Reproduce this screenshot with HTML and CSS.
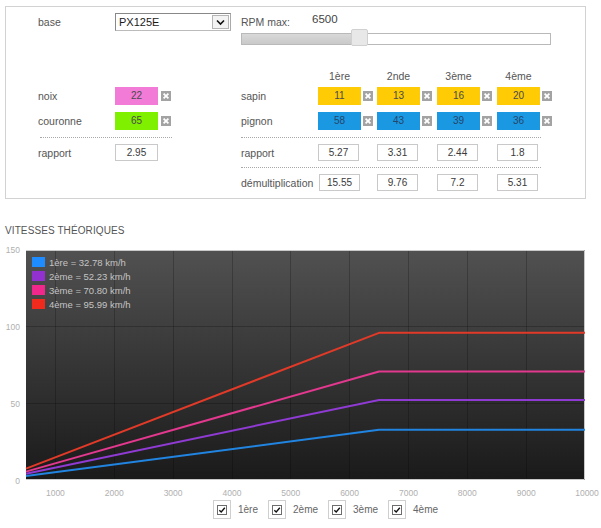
FILE: index.html
```html
<!DOCTYPE html>
<html lang="fr">
<head>
<meta charset="utf-8">
<title>Vitesses</title>
<link rel="stylesheet" href="styles.css">
</head>
<body>
<div class="panel">
  <div class="row r-top">
    <span class="lbl">base</span>
    <div class="select"><span class="sel-text">PX125E</span><span class="sel-btn"><svg width="15" height="14" viewBox="0 0 15 14"><path d="M4 5.5L7.5 9L11 5.5" fill="none" stroke="#111" stroke-width="1.6"/></svg></span></div>
    <div class="rpm"><span class="lbl rpm-lbl">RPM max:</span><span class="rpm-val">6500</span></div>
  </div>
  <div class="row r-slider">
    <div class="track"><div class="fill"></div><div class="handle"></div></div>
  </div>
  <div class="row r-head">
    <span class="hd c4">1ère</span>
    <span class="hd c5">2nde</span>
    <span class="hd c6">3ème</span>
    <span class="hd c7">4ème</span>
  </div>
  <div class="row r-sapin">
    <span class="lbl">noix</span>
    <div class="field"><span class="in pink">22</span><svg class="x" width="10" height="10" viewBox="0 0 10 10"><rect width="10" height="10" fill="#a3a3a3"/><path d="M2.6 2.6L7.4 7.4M7.4 2.6L2.6 7.4" stroke="#fff" stroke-width="1.8"/></svg></div>
    <span class="lbl">sapin</span>
    <div class="field"><span class="in yellow">11</span><svg class="x" width="10" height="10" viewBox="0 0 10 10"><rect width="10" height="10" fill="#a3a3a3"/><path d="M2.6 2.6L7.4 7.4M7.4 2.6L2.6 7.4" stroke="#fff" stroke-width="1.8"/></svg></div>
    <div class="field"><span class="in yellow">13</span><svg class="x" width="10" height="10" viewBox="0 0 10 10"><rect width="10" height="10" fill="#a3a3a3"/><path d="M2.6 2.6L7.4 7.4M7.4 2.6L2.6 7.4" stroke="#fff" stroke-width="1.8"/></svg></div>
    <div class="field"><span class="in yellow">16</span><svg class="x" width="10" height="10" viewBox="0 0 10 10"><rect width="10" height="10" fill="#a3a3a3"/><path d="M2.6 2.6L7.4 7.4M7.4 2.6L2.6 7.4" stroke="#fff" stroke-width="1.8"/></svg></div>
    <div class="field"><span class="in yellow">20</span><svg class="x" width="10" height="10" viewBox="0 0 10 10"><rect width="10" height="10" fill="#a3a3a3"/><path d="M2.6 2.6L7.4 7.4M7.4 2.6L2.6 7.4" stroke="#fff" stroke-width="1.8"/></svg></div>
  </div>
  <div class="row r-pignon">
    <span class="lbl">couronne</span>
    <div class="field"><span class="in green">65</span><svg class="x" width="10" height="10" viewBox="0 0 10 10"><rect width="10" height="10" fill="#a3a3a3"/><path d="M2.6 2.6L7.4 7.4M7.4 2.6L2.6 7.4" stroke="#fff" stroke-width="1.8"/></svg></div>
    <span class="lbl">pignon</span>
    <div class="field"><span class="in blue">58</span><svg class="x" width="10" height="10" viewBox="0 0 10 10"><rect width="10" height="10" fill="#a3a3a3"/><path d="M2.6 2.6L7.4 7.4M7.4 2.6L2.6 7.4" stroke="#fff" stroke-width="1.8"/></svg></div>
    <div class="field"><span class="in blue">43</span><svg class="x" width="10" height="10" viewBox="0 0 10 10"><rect width="10" height="10" fill="#a3a3a3"/><path d="M2.6 2.6L7.4 7.4M7.4 2.6L2.6 7.4" stroke="#fff" stroke-width="1.8"/></svg></div>
    <div class="field"><span class="in blue">39</span><svg class="x" width="10" height="10" viewBox="0 0 10 10"><rect width="10" height="10" fill="#a3a3a3"/><path d="M2.6 2.6L7.4 7.4M7.4 2.6L2.6 7.4" stroke="#fff" stroke-width="1.8"/></svg></div>
    <div class="field"><span class="in blue">36</span><svg class="x" width="10" height="10" viewBox="0 0 10 10"><rect width="10" height="10" fill="#a3a3a3"/><path d="M2.6 2.6L7.4 7.4M7.4 2.6L2.6 7.4" stroke="#fff" stroke-width="1.8"/></svg></div>
  </div>
  <div class="row dots">
    <div class="dot-left"></div>
    <div class="dot-right"></div>
  </div>
  <div class="row r-rapport">
    <span class="lbl">rapport</span>
    <span class="box box-left">2.95</span>
    <span class="lbl">rapport</span>
    <span class="box">5.27</span>
    <span class="box">3.31</span>
    <span class="box">2.44</span>
    <span class="box">1.8</span>
  </div>
  <div class="row dots2">
    <div class="dot-right"></div>
  </div>
  <div class="row r-demul">
    <span class="lbl c3">démultiplication</span>
    <span class="box shift">15.55</span>
    <span class="box">9.76</span>
    <span class="box">7.2</span>
    <span class="box">5.31</span>
  </div>
</div>

<div class="title">VITESSES THÉORIQUES</div>

<svg class="chart" width="601" height="262" viewBox="0 0 601 262">
  <defs>
    <linearGradient id="plotbg" x1="0" y1="0" x2="0" y2="1">
      <stop offset="0" stop-color="#515151"/>
      <stop offset="1" stop-color="#1a1a1a"/>
    </linearGradient>
  </defs>
  <rect x="26" y="12" width="559" height="230" fill="url(#plotbg)"/>
  <g stroke="#000" stroke-opacity="0.22" stroke-width="1">
    <line x1="55.5" y1="12" x2="55.5" y2="242"/>
    <line x1="114.5" y1="12" x2="114.5" y2="242"/>
    <line x1="173.5" y1="12" x2="173.5" y2="242"/>
    <line x1="232.5" y1="12" x2="232.5" y2="242"/>
    <line x1="290.5" y1="12" x2="290.5" y2="242"/>
    <line x1="349.5" y1="12" x2="349.5" y2="242"/>
    <line x1="408.5" y1="12" x2="408.5" y2="242"/>
    <line x1="467.5" y1="12" x2="467.5" y2="242"/>
    <line x1="526.5" y1="12" x2="526.5" y2="242"/>
    <line x1="26" y1="88.5" x2="585" y2="88.5"/>
    <line x1="26" y1="165.5" x2="585" y2="165.5"/>
  </g>
  <path d="M26 12.5H584.5V241.5H26" fill="none" stroke="#c9c9c9" stroke-width="1"/>
  <g fill="none" stroke-width="2" stroke-linejoin="round">
    <polyline points="26,238.1 379.05,191.74 585,191.74" stroke="#2184e0"/>
    <polyline points="26,235.84 379.05,161.91 585,161.91" stroke="#8f3bd3"/>
    <polyline points="26,233.65 379.05,133.44 585,133.44" stroke="#e2388e"/>
    <polyline points="26,230.68 379.05,94.82 585,94.82" stroke="#e23a28"/>
  </g>
  <g class="legend">
    <rect x="32" y="19" width="13" height="10" fill="#1e8cff"/>
    <rect x="32" y="33" width="13" height="10" fill="#9330d0"/>
    <rect x="32" y="47" width="13" height="10" fill="#f0288c"/>
    <rect x="32" y="61" width="13" height="10" fill="#f02a1c"/>
    <text x="49" y="27.5">1ère = 32.78 km/h</text>
    <text x="49" y="41.5">2ème = 52.23 km/h</text>
    <text x="49" y="55.5">3ème = 70.80 km/h</text>
    <text x="49" y="69.5">4ème = 95.99 km/h</text>
  </g>
  <g class="ylab">
    <text x="20" y="15">150</text>
    <text x="20" y="92">100</text>
    <text x="20" y="169">50</text>
    <text x="20" y="246">0</text>
  </g>
  <g class="xlab">
    <text x="55.4" y="258">1000</text>
    <text x="114.3" y="258">2000</text>
    <text x="173.1" y="258">3000</text>
    <text x="232" y="258">4000</text>
    <text x="290.8" y="258">5000</text>
    <text x="349.6" y="258">6000</text>
    <text x="408.5" y="258">7000</text>
    <text x="467.3" y="258">8000</text>
    <text x="526.2" y="258">9000</text>
    <text x="587" y="258">10000</text>
  </g>
</svg>

<div class="checks">
  <label class="chk"><span class="cbox"><span class="cb"><svg width="8" height="8" viewBox="0 0 8 8"><path d="M1.3 4.2L3.2 6L6.8 1.8" fill="none" stroke="#111" stroke-width="1.4"/></svg></span></span><span class="clbl">1ère</span></label>
  <label class="chk"><span class="cbox"><span class="cb"><svg width="8" height="8" viewBox="0 0 8 8"><path d="M1.3 4.2L3.2 6L6.8 1.8" fill="none" stroke="#111" stroke-width="1.4"/></svg></span></span><span class="clbl">2ème</span></label>
  <label class="chk"><span class="cbox"><span class="cb"><svg width="8" height="8" viewBox="0 0 8 8"><path d="M1.3 4.2L3.2 6L6.8 1.8" fill="none" stroke="#111" stroke-width="1.4"/></svg></span></span><span class="clbl">3ème</span></label>
  <label class="chk"><span class="cbox"><span class="cb"><svg width="8" height="8" viewBox="0 0 8 8"><path d="M1.3 4.2L3.2 6L6.8 1.8" fill="none" stroke="#111" stroke-width="1.4"/></svg></span></span><span class="clbl">4ème</span></label>
</div>
</body>
</html>
```
FILE: styles.css
```css
* { box-sizing: border-box; }
html, body { margin: 0; padding: 0; background: #fff; }
body {
  font-family: "Liberation Sans", Arial, sans-serif;
  color: #555;
  font-size: 10.5px;
  width: 601px;
}

.panel {
  margin: 6px 0 0 5px;
  width: 581px;
  height: 193px;
  border: 1px solid #d2d2d2;
  padding: 6px 0 0 32px;
}

.row {
  display: grid;
  grid-template-columns: 77px 126px 77px 59px 60px 60px 60px;
  align-items: center;
}

.lbl { color: #555; white-space: nowrap; line-height: 14px; }

.r-top { height: 18px; }
.select {
  width: 116px;
  height: 18px;
  border: 1px solid #888;
  border-right-color: #aaa;
  border-bottom-color: #bbb;
  display: flex;
  align-items: stretch;
  background: #fff;
}
.sel-text {
  flex: 1;
  padding-left: 3px;
  color: #1a1a1a;
  font-size: 11px;
  line-height: 16px;
}
.sel-btn {
  width: 17px;
  margin: 1px;
  border: 1px solid #b5b5b5;
  background: #f3f3f3;
  display: flex;
  align-items: center;
  justify-content: center;
}
.rpm {
  grid-column: 3 / -1;
  display: flex;
  align-self: stretch;
}
.rpm-lbl { width: 71px; line-height: 18px; }
.rpm-val { font-size: 11.5px; color: #444; line-height: 12px; }

.r-slider { height: 14px; }
.track {
  grid-column: 3 / -1;
  align-self: end;
  position: relative;
  width: 310px;
  height: 12px;
  border: 1px solid #b9b9b9;
  background: #fff;
}
.fill {
  width: 117px;
  height: 100%;
  background: linear-gradient(#d8d8d8, #c9c9c9);
}
.handle {
  position: absolute;
  left: 109px;
  top: -5px;
  width: 17px;
  height: 17px;
  border: 1px solid #d0d0d0;
  border-radius: 2px;
  background: #e8e8e8;
}

.r-head { margin-top: 23px; height: 16px; }
.hd {
  width: 43px;
  text-align: center;
  line-height: 16px;
  color: #555;
}
.c4 { grid-column: 4; }
.c5 { grid-column: 5; }
.c6 { grid-column: 6; }
.c7 { grid-column: 7; }
.c3 { grid-column: 3; }

.r-sapin { margin-top: 3px; height: 18px; }
.r-pignon { margin-top: 7px; height: 18px; }

.field { display: flex; align-items: center; }
.in {
  width: 43px;
  height: 18px;
  line-height: 18px;
  text-align: center;
  font-size: 10px;
  color: #4a4a4a;
}
.pink { background: #f27bd7; }
.green { background: #7ff000; }
.yellow { background: #ffcb05; }
.blue { background: #1b98e2; color: #24466a; }
.x { display: block; margin-left: 2px; }
.r-sapin .field:nth-child(2) .x,
.r-pignon .field:nth-child(2) .x { margin-left: 3px; }

.dots { margin-top: 7px; height: 1px; }
.dot-left {
  grid-column: 1 / 3;
  margin-left: 2px;
  width: 132px;
  border-top: 1px dotted #a8a8a8;
}
.dot-right {
  grid-column: 3 / -1;
  width: 300px;
  border-top: 1px dotted #a8a8a8;
}

.r-rapport { margin-top: 6px; height: 17px; }
.dots2 { margin-top: 6px; height: 1px; }
.r-demul { margin-top: 6px; height: 17px; }

.box {
  width: 41px;
  height: 17px;
  line-height: 15px;
  border: 1px solid #c9c9c9;
  background: #fff;
  text-align: center;
  font-size: 10px;
  color: #3a3a3a;
}
.box-left { width: 43px; }
.shift { margin-left: 1px; }

.title {
  margin: 25px 0 0 5px;
  font-size: 10px;
  line-height: 14px;
  letter-spacing: 0.1px;
  color: #555;
}

.chart { display: block; }
.legend text { font-family: "Liberation Sans", Arial, sans-serif; font-size: 9.5px; fill: #c4c4c4; }
.ylab text { font-family: "Liberation Sans", Arial, sans-serif; font-size: 8.5px; fill: #b0b0b0; text-anchor: end; }
.xlab text { font-family: "Liberation Sans", Arial, sans-serif; font-size: 8.5px; fill: #b0b0b0; text-anchor: middle; }

.checks {
  display: flex;
  gap: 10px;
  padding-left: 213px;
  height: 19px;
}
.chk { display: flex; align-items: center; }
.cbox {
  width: 18px;
  height: 19px;
  border: 1px solid #cfcfcf;
  display: flex;
  align-items: center;
  justify-content: center;
}
.cb {
  width: 10px;
  height: 10px;
  border: 1px solid #6d6d6d;
  display: flex;
  align-items: center;
  justify-content: center;
  background: #fff;
}
.cb svg { display: block; }
.clbl { margin-left: 7px; font-size: 10px; color: #666; }
```
